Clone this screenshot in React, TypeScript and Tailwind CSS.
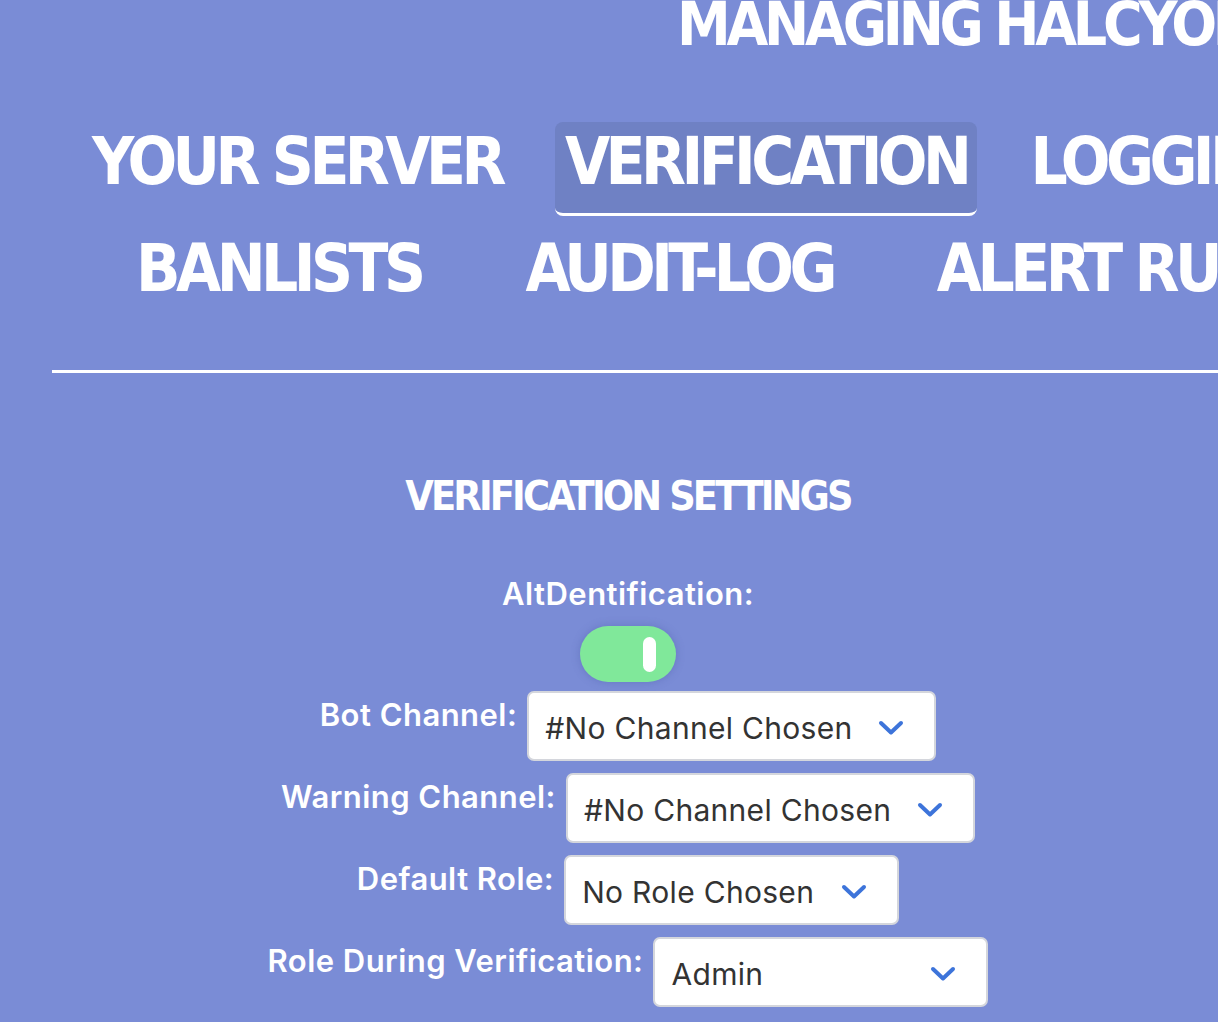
import React from "react";

const din = { fontFamily: '"DejaVu Sans Condensed", "DejaVu Sans", Roboto, sans-serif', fontStretch: "condensed" as const };
const ui = { fontFamily: 'Inter, Roboto, "Noto Sans", sans-serif' };

function Chevron() {
  return (
    <svg width="26" height="16" viewBox="0 0 26 16" fill="none">
      <path d="M3 3 L13 12.5 L23 3" stroke="#3d74da" strokeWidth="4" strokeLinecap="round" strokeLinejoin="round" />
    </svg>
  );
}

function Select({ text, width }: { text: string; width: string }) {
  return (
    <div
      className={`${width} h-[70px] bg-white border-2 border-[#d4d6dc] rounded-[7px] flex items-center justify-between pl-[16px] pr-[30px] pt-[3px] shrink-0`}
    >
      <span className="text-[30px] tracking-[0.01em] text-[#333333] leading-none whitespace-nowrap" style={ui}>
        {text}
      </span>
      <Chevron />
    </div>
  );
}

function Row({ label, text, width }: { label: string; text: string; width: string }) {
  return (
    <div className="flex items-start gap-[10px]">
      <span className="mt-[6px] text-[31px] tracking-[0.015em] leading-[36px] font-semibold text-white whitespace-nowrap" style={ui}>
        {label}
      </span>
      <Select text={text} width={width} />
    </div>
  );
}

function Tab({ label, active }: { label: string; active?: boolean }) {
  return (
    <div
      className={`px-[10px] pt-[5px] pb-[16px] rounded-[8px] border-b-[3px] whitespace-nowrap shrink-0 ${
        active ? "bg-[#6f81c4] border-white" : "border-transparent"
      }`}
    >
      <span className="block text-[65px] leading-[70px] tracking-[-0.07em] font-bold text-white" style={din}>
        {label}
      </span>
    </div>
  );
}

export default function App() {
  return (
    <div className="w-full min-h-[1022px] bg-[#7a8cd6] overflow-hidden">
      <div className="w-[1256px]">
        <div className="h-[48px] pl-[677px] whitespace-nowrap">
          <span className="block text-[60px] leading-[48px] tracking-[-0.07em] font-bold text-white" style={din}>
            MANAGING HALCYON
          </span>
        </div>

        <div className="mt-[74px] flex gap-[43px] pl-[82px]">
          <Tab label="YOUR SERVER" />
          <Tab label="VERIFICATION" active />
          <Tab label="LOGGING" />
        </div>
        <div className="mt-[13px] flex gap-[84px] pl-[126px]">
          <Tab label="BANLISTS" />
          <Tab label="AUDIT-LOG" />
          <Tab label="ALERT RULES" />
        </div>

        <div className="mt-[47px] ml-[52px] h-[3px] bg-white" />

        <div className="mt-[102px] flex flex-col items-center">
          <h2 className="text-[41px] leading-[42px] tracking-[-0.07em] font-bold text-white whitespace-nowrap" style={din}>
            VERIFICATION SETTINGS
          </h2>
          <div className="mt-[59px] text-[31px] tracking-[0.015em] leading-[36px] font-semibold text-white" style={ui}>
            AltDentification:
          </div>
          <div className="mt-[14px] w-[96px] h-[56px] rounded-full bg-[#80e89a] shadow-[0_0_8px_rgba(80,95,170,0.45)] flex items-center justify-end pr-[20px]">
            <div className="w-[13px] h-[35px] rounded-full bg-white" />
          </div>
          <div className="mt-[9px] flex flex-col items-center gap-[12px]">
            <Row label="Bot Channel:" text="#No Channel Chosen" width="w-[409px]" />
            <Row label="Warning Channel:" text="#No Channel Chosen" width="w-[409px]" />
            <Row label="Default Role:" text="No Role Chosen" width="w-[335px]" />
            <Row label="Role During Verification:" text="Admin" width="w-[335px]" />
          </div>
        </div>
      </div>
    </div>
  );
}
